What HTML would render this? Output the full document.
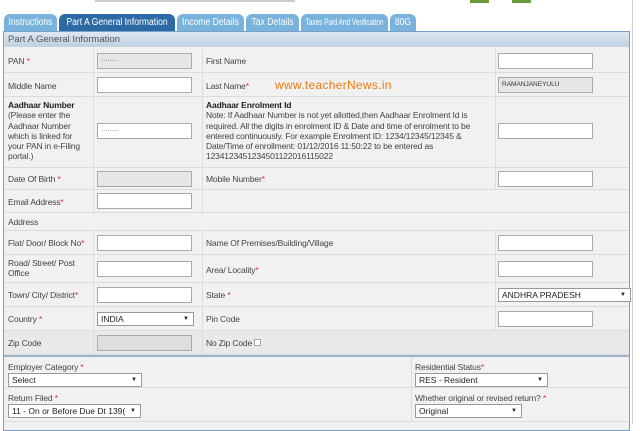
<!DOCTYPE html>
<html><head><meta charset="utf-8"><style>
*{box-sizing:border-box;margin:0;padding:0}
body{width:640px;height:424px;background:#fff;font-family:"Liberation Sans",Arial,sans-serif;font-size:8.5px;color:#444;position:relative;overflow:hidden}
.a{position:absolute}
.tab{position:absolute;top:14px;height:18px;background:#79b2dd;color:#fff;border-radius:6px 6px 0 0;font-size:10px;line-height:18px;white-space:nowrap}
.tab span{position:absolute;left:-50px;right:-50px;top:0;text-align:center;transform:scaleX(0.86)}
.row{position:absolute;left:4px;width:625px;background:#f1f1f1;border-bottom:1px solid #dcdcdc}
.c{position:absolute;top:0;bottom:0;border-left:1px solid #dcdcdc}
.lbl{position:absolute;font-size:8.5px;color:#444;letter-spacing:-0.15px}
.in{position:absolute;height:16px;background:#fff;border:1px solid #aaa;font-size:6.5px;line-height:14px;padding-left:3px;color:#333}
.dis{background:#e6e6e6}
.sel{position:absolute;height:14px;background:#fff;border:1px solid #999;font-size:8.5px;line-height:12px;padding-left:3px;color:#222}
.sel:after{content:"▼";position:absolute;right:4px;font-size:6px;top:0}
.r{color:#c33}
</style></head><body>
<div class="a" style="left:95px;top:0;width:200px;height:2px;background:#ccc"></div>
<div class="a" style="left:470px;top:0;width:19px;height:3px;background:#6a9a3a"></div>
<div class="a" style="left:512px;top:0;width:19px;height:3px;background:#6a9a3a"></div>
<div class="a" style="left:632px;top:0;width:1px;height:424px;background:#ccc"></div>

<div class="tab" style="left:4px;width:53px"><span>Instructions</span></div>
<div class="tab" style="left:59px;width:116px;background:#2d6aa5"><span>Part A General Information</span></div>
<div class="tab" style="left:177px;width:67px"><span>Income Details</span></div>
<div class="tab" style="left:246px;width:53px"><span>Tax Details</span></div>
<div class="tab" style="left:301px;width:87px;font-size:9.5px"><span style="transform:scaleX(0.68)">Taxes Paid And Verification</span></div>
<div class="tab" style="left:390px;width:26px"><span>80G</span></div>

<div class="a" style="left:3px;top:31px;width:627px;height:400px;border:1px solid #7aa0c4;background:#f1f1f1"></div>
<div class="a" style="left:4px;top:32px;width:625px;height:15px;background:linear-gradient(#dde8f2,#bfd2e2);color:#555;font-size:9.5px;line-height:15px;padding-left:4px;border-bottom:1px solid #c8d4de">Part A General Information</div>

<div class="row" style="top:47px;height:26px"><div class="c" style="left:89px"></div><div class="c" style="left:198px"></div><div class="c" style="left:491px"></div>
<div class="lbl" style="left:4px;top:9px">PAN <span class="r">*</span></div>
<div class="in dis" style="left:93px;top:6px;width:95px">········</div>
<div class="lbl" style="left:202px;top:9px">First Name</div>
<div class="in" style="left:494px;top:6px;width:95px"></div></div>
<div class="row" style="top:73px;height:24px"><div class="c" style="left:89px"></div><div class="c" style="left:198px"></div><div class="c" style="left:491px"></div>
<div class="lbl" style="left:4px;top:8px">Middle Name</div>
<div class="in" style="left:93px;top:4px;width:95px"></div>
<div class="lbl" style="left:202px;top:8px">Last Name<span class="r">*</span></div>
<div class="a" style="left:271px;top:5px;font-size:12px;color:#f07a10;letter-spacing:0.3px">www.teacherNews.in</div>
<div class="in dis" style="left:494px;top:4px;width:95px">RAMANJANEYULU</div></div>
<div class="row" style="top:97px;height:71px"><div class="c" style="left:89px"></div><div class="c" style="left:198px"></div><div class="c" style="left:491px"></div>
<div class="lbl" style="left:4px;top:3px;line-height:10.3px;width:78px"><b style="color:#222">Aadhaar Number</b><br>(Please enter the Aadhaar Number which is linked for your PAN in e-Filing portal.)</div>
<div class="in" style="left:93px;top:26px;width:95px">········</div>
<div class="lbl" style="left:202px;top:3px;line-height:10.3px;width:270px"><b style="color:#222">Aadhaar Enrolment Id</b><br>Note: If Aadhaar Number is not yet allotted,then Aadhaar Enrolment Id is required. All the digits in enrolment ID &amp; Date and time of enrolment to be entered continuously. For example Enrolment ID: 1234/12345/12345 &amp; Date/Time of enrollment: 01/12/2016 11:50:22 to be entered as 1234123451234501122016115022</div>
<div class="in" style="left:494px;top:26px;width:95px"></div></div>
<div class="row" style="top:168px;height:22px"><div class="c" style="left:89px"></div><div class="c" style="left:198px"></div><div class="c" style="left:491px"></div>
<div class="lbl" style="left:4px;top:6px">Date Of Birth <span class="r">*</span></div>
<div class="in dis" style="left:93px;top:3px;width:95px"></div>
<div class="lbl" style="left:202px;top:6px">Mobile Number<span class="r">*</span></div>
<div class="in" style="left:494px;top:3px;width:95px"></div></div>
<div class="row" style="top:190px;height:23px"><div class="c" style="left:89px"></div><div class="c" style="left:198px"></div>
<div class="lbl" style="left:4px;top:7px">Email Address<span class="r">*</span></div>
<div class="in" style="left:93px;top:3px;width:95px"></div></div>
<div class="row" style="top:213px;height:18px"><div class="lbl" style="left:4px;top:4px">Address</div></div>
<div class="row" style="top:231px;height:24px"><div class="c" style="left:89px"></div><div class="c" style="left:198px"></div><div class="c" style="left:491px"></div>
<div class="lbl" style="left:4px;top:7px">Flat/ Door/ Block No<span class="r">*</span></div>
<div class="in" style="left:93px;top:4px;width:95px"></div>
<div class="lbl" style="left:202px;top:7px">Name Of Premises/Building/Village</div>
<div class="in" style="left:494px;top:4px;width:95px"></div></div>
<div class="row" style="top:255px;height:28px"><div class="c" style="left:89px"></div><div class="c" style="left:198px"></div><div class="c" style="left:491px"></div>
<div class="lbl" style="left:4px;top:3px;line-height:10px">Road/ Street/ Post<br>Office</div>
<div class="in" style="left:93px;top:6px;width:95px"></div>
<div class="lbl" style="left:202px;top:10px">Area/ Locality<span class="r">*</span></div>
<div class="in" style="left:494px;top:6px;width:95px"></div></div>
<div class="row" style="top:283px;height:24px"><div class="c" style="left:89px"></div><div class="c" style="left:198px"></div><div class="c" style="left:491px"></div>
<div class="lbl" style="left:4px;top:7px">Town/ City/ District<span class="r">*</span></div>
<div class="in" style="left:93px;top:4px;width:95px"></div>
<div class="lbl" style="left:202px;top:7px">State <span class="r">*</span></div>
<div class="sel" style="left:494px;top:5px;width:133px">ANDHRA PRADESH</div></div>
<div class="row" style="top:307px;height:24px"><div class="c" style="left:89px"></div><div class="c" style="left:198px"></div><div class="c" style="left:491px"></div>
<div class="lbl" style="left:4px;top:7px">Country <span class="r">*</span></div>
<div class="sel" style="left:93px;top:5px;width:97px">INDIA</div>
<div class="lbl" style="left:202px;top:7px">Pin Code</div>
<div class="in" style="left:494px;top:4px;width:95px"></div></div>
<div class="row" style="top:331px;height:24px;background:#e9e9e9"><div class="c" style="left:89px"></div><div class="c" style="left:198px"></div>
<div class="lbl" style="left:4px;top:7px">Zip Code</div>
<div class="in dis" style="left:93px;top:4px;width:95px;background:#dedede"></div>
<div class="lbl" style="left:202px;top:7px">No Zip Code <span style="display:inline-block;width:7px;height:7px;border:1px solid #aaa;background:#fff"></span></div></div>
<div class="a" style="left:4px;top:355px;width:625px;height:2px;background:#9bb3c8"></div>
<div class="row" style="top:357px;height:31px"><div class="c" style="left:407px"></div>
<div class="lbl" style="left:4px;top:5px">Employer Category <span class="r">*</span></div>
<div class="sel" style="left:4px;top:16px;width:134px">Select</div>
<div class="lbl" style="left:411px;top:5px">Residential Status<span class="r">*</span></div>
<div class="sel" style="left:411px;top:16px;width:133px">RES - Resident</div></div>
<div class="row" style="top:388px;height:34px"><div class="c" style="left:407px"></div>
<div class="lbl" style="left:4px;top:5px">Return Filed <span class="r">*</span></div>
<div class="sel" style="left:4px;top:16px;width:133px">11 - On or Before Due Dt 139(</div>
<div class="lbl" style="left:411px;top:5px">Whether original or revised return? <span class="r">*</span></div>
<div class="sel" style="left:411px;top:16px;width:107px">Original</div></div>
</body></html>
